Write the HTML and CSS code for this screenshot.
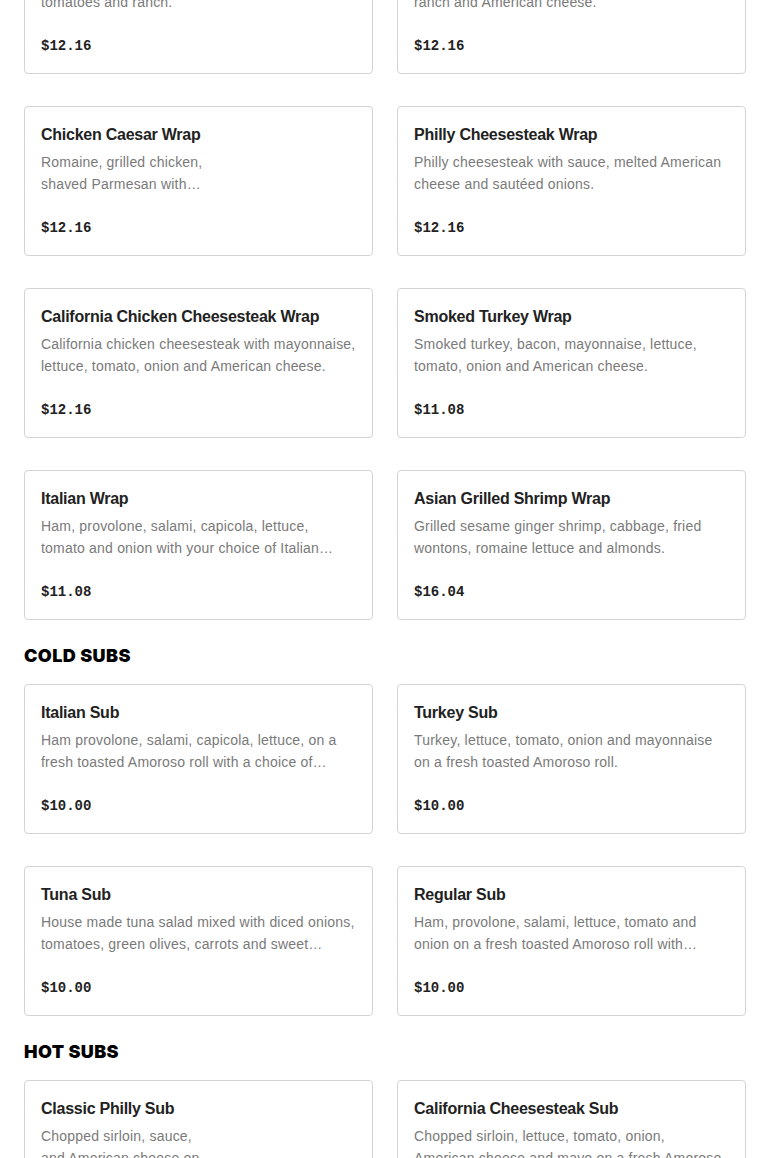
FILE: index.html
```html
<!DOCTYPE html>
<html lang="en">
<head>
<meta charset="utf-8">
<title>Menu</title>
<link rel="stylesheet" href="styles.css">
</head>
<body>
<main class="menu">
  <section class="section section-scrolled">
    <div class="grid">
      <article class="card">
        <h3 class="title">Buffalo Chicken Wrap</h3>
        <p class="desc">Crispy buffalo chicken, romaine lettuce, diced<br>tomatoes and ranch.</p>
        <p class="price">$12.16</p>
      </article>
      <article class="card">
        <h3 class="title">Chicken Bacon Ranch Wrap</h3>
        <p class="desc">Grilled chicken, bacon, lettuce, tomato,<br>ranch and American cheese.</p>
        <p class="price">$12.16</p>
      </article>
      <article class="card">
        <h3 class="title">Chicken Caesar Wrap</h3>
        <p class="desc">Romaine, grilled chicken,<br>shaved Parmesan with…</p>
        <p class="price">$12.16</p>
      </article>
      <article class="card">
        <h3 class="title">Philly Cheesesteak Wrap</h3>
        <p class="desc">Philly cheesesteak with sauce, melted American<br>cheese and sautéed onions.</p>
        <p class="price">$12.16</p>
      </article>
      <article class="card">
        <h3 class="title">California Chicken Cheesesteak Wrap</h3>
        <p class="desc">California chicken cheesesteak with mayonnaise,<br>lettuce, tomato, onion and American cheese.</p>
        <p class="price">$12.16</p>
      </article>
      <article class="card">
        <h3 class="title">Smoked Turkey Wrap</h3>
        <p class="desc">Smoked turkey, bacon, mayonnaise, lettuce,<br>tomato, onion and American cheese.</p>
        <p class="price">$11.08</p>
      </article>
      <article class="card">
        <h3 class="title">Italian Wrap</h3>
        <p class="desc">Ham, provolone, salami, capicola, lettuce,<br>tomato and onion with your choice of Italian…</p>
        <p class="price">$11.08</p>
      </article>
      <article class="card">
        <h3 class="title">Asian Grilled Shrimp Wrap</h3>
        <p class="desc">Grilled sesame ginger shrimp, cabbage, fried<br>wontons, romaine lettuce and almonds.</p>
        <p class="price">$16.04</p>
      </article>
    </div>
  </section>

  <section class="section">
    <h2 class="heading">COLD SUBS</h2>
    <div class="grid">
      <article class="card">
        <h3 class="title">Italian Sub</h3>
        <p class="desc">Ham provolone, salami, capicola, lettuce, on a<br>fresh toasted Amoroso roll with a choice of…</p>
        <p class="price">$10.00</p>
      </article>
      <article class="card">
        <h3 class="title">Turkey Sub</h3>
        <p class="desc">Turkey, lettuce, tomato, onion and mayonnaise<br>on a fresh toasted Amoroso roll.</p>
        <p class="price">$10.00</p>
      </article>
      <article class="card">
        <h3 class="title">Tuna Sub</h3>
        <p class="desc">House made tuna salad mixed with diced onions,<br>tomatoes, green olives, carrots and sweet…</p>
        <p class="price">$10.00</p>
      </article>
      <article class="card">
        <h3 class="title">Regular Sub</h3>
        <p class="desc">Ham, provolone, salami, lettuce, tomato and<br>onion on a fresh toasted Amoroso roll with…</p>
        <p class="price">$10.00</p>
      </article>
    </div>
  </section>

  <section class="section">
    <h2 class="heading">HOT SUBS</h2>
    <div class="grid">
      <article class="card">
        <h3 class="title">Classic Philly Sub</h3>
        <p class="desc">Chopped sirloin, sauce,<br>and American cheese on…</p>
        <p class="price">$11.08</p>
      </article>
      <article class="card">
        <h3 class="title">California Cheesesteak Sub</h3>
        <p class="desc">Chopped sirloin, lettuce, tomato, onion,<br>American cheese and mayo on a fresh Amoroso…</p>
        <p class="price">$11.08</p>
      </article>
    </div>
  </section>
</main>
</body>
</html>
```

FILE: styles.css
```css
* { box-sizing: border-box; }

html, body {
  margin: 0;
  padding: 0;
  background: #ffffff;
}

body {
  font-family: "Liberation Sans", Arial, sans-serif;
  color: #1f1f1f;
  overflow: hidden;
}

.menu {
  padding: 0 24px;
}

.section-scrolled {
  margin-top: -76px;
}

.heading {
  margin: 24px 0 16px;
  font-family: "Inter", "Liberation Sans", sans-serif;
  font-weight: 900;
  font-size: 18px;
  line-height: 24px;
  color: #000000;
  letter-spacing: 0.4px;
}

.grid {
  display: grid;
  grid-template-columns: repeat(2, minmax(0, 1fr));
  column-gap: 24px;
  row-gap: 32px;
}

.card {
  border: 1px solid #d4d4d4;
  border-radius: 4px;
  padding: 16px 16px 15px;
  background: #ffffff;
  height: 150px;
  min-width: 0;
}

.title {
  margin: 0;
  font-size: 16px;
  line-height: 24px;
  font-weight: 700;
  color: #222222;
  letter-spacing: -0.25px;
  white-space: nowrap;
}

.desc {
  margin: 4px 0 0;
  font-size: 14px;
  line-height: 22px;
  color: #7a7a7a;
  letter-spacing: 0.2px;
  white-space: nowrap;
  overflow: hidden;
}

.price {
  margin: 21px 0 0;
  font-family: "Liberation Mono", "DejaVu Sans Mono", monospace;
  font-weight: 700;
  font-size: 14px;
  line-height: 24px;
  color: #222222;
}
```
